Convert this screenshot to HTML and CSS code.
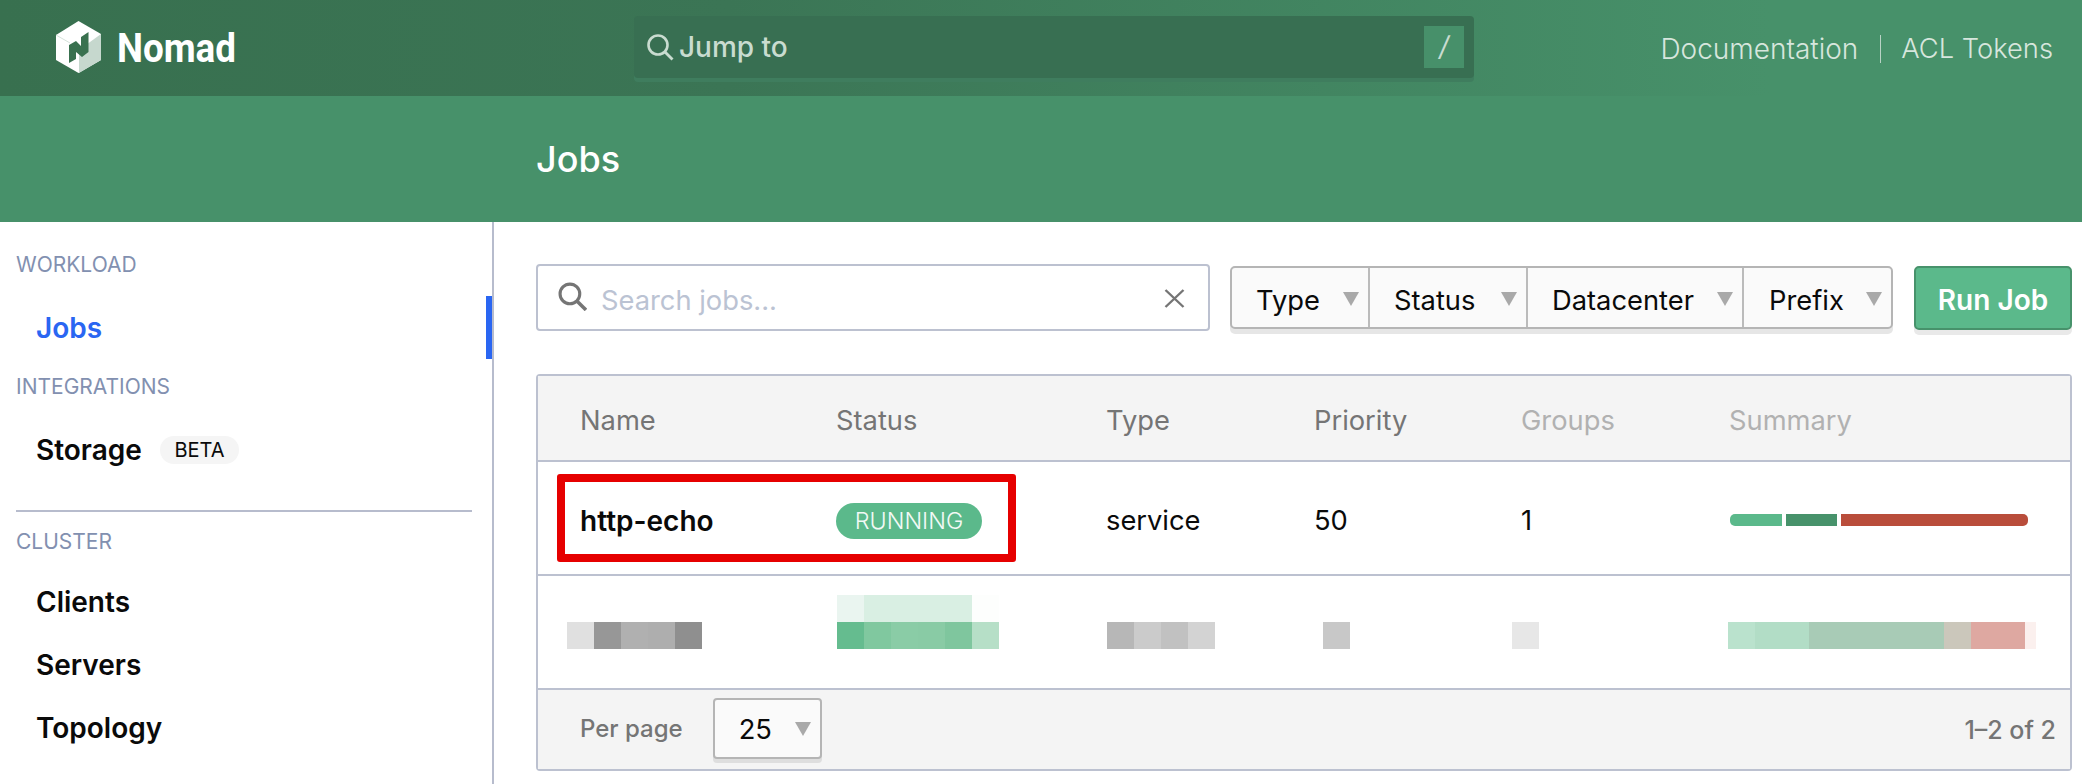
FILE: index.html
```html
<!DOCTYPE html>
<html>
<head>
<title>Jobs - Nomad</title>
<link rel="stylesheet" href="styles.css">
</head>
<body>
<header class="navbar">
  <a class="brand">
    <svg class="logo" viewBox="0 0 45 52">
      <polygon points="22.5,0 45,13 45,39 22.5,52 0,39 0,14" fill="#fff"/>
      <polygon points="23,52 23,29 45,13 45,39" fill="#c6d8ce"/>
      <line x1="0" y1="14" x2="14" y2="22" stroke="#d5e2da" stroke-width="1"/>
      <polygon points="13,24 20,20 25,25 25,16 32.5,11 32.5,31 26,36 20,31 20,38 13,42" fill="#39714f"/>
    </svg>
    <span class="brand-name">Nomad</span>
  </a>
  <div class="jump">
    <svg class="jump-icon" viewBox="0 0 28 28">
      <circle cx="12" cy="12" r="9.5" fill="none" stroke="#c9dcd0" stroke-width="2.6"/>
      <line x1="19" y1="19" x2="26.5" y2="26.5" stroke="#c9dcd0" stroke-width="2.8"/>
    </svg>
    <span class="jump-text">Jump to</span>
    <span class="jump-key">/</span>
  </div>
  <nav class="nav-links">
    <a class="nav-link">Documentation</a>
    <a class="nav-link nav-link-last">ACL Tokens</a>
  </nav>
</header>

<div class="subnav"><h1 class="page-title">Jobs</h1></div>

<div class="layout">
  <aside class="sidebar">
    <p class="menu-label label-first">WORKLOAD</p>
    <a class="menu-item active">Jobs</a>
    <p class="menu-label label-second">INTEGRATIONS</p>
    <a class="menu-item storage">Storage <span class="beta">BETA</span></a>
    <hr class="menu-rule">
    <p class="menu-label">CLUSTER</p>
    <a class="menu-item clients">Clients</a>
    <a class="menu-item">Servers</a>
    <a class="menu-item">Topology</a>
  </aside>

  <main class="content">
    <div class="toolbar">
      <div class="search">
        <svg class="search-icon" viewBox="0 0 28 28">
          <circle cx="11.5" cy="11.5" r="9.5" fill="none" stroke="#757575" stroke-width="3"/>
          <line x1="18" y1="18" x2="27" y2="27" stroke="#757575" stroke-width="3.4"/>
        </svg>
        <span class="search-text">Search jobs...</span>
        <svg class="search-clear" viewBox="0 0 21 19">
          <path d="M1.5 1 L19.5 18 M19.5 1 L1.5 18" fill="none" stroke="#757575" stroke-width="2.4"/>
        </svg>
      </div>
      <div class="filters">
        <button class="filter f-type">Type<i class="caret"></i></button>
        <button class="filter f-status">Status<i class="caret"></i></button>
        <button class="filter f-dc">Datacenter<i class="caret"></i></button>
        <button class="filter f-prefix">Prefix<i class="caret"></i></button>
      </div>
      <button class="run-job">Run Job</button>
    </div>

    <div class="table">
      <div class="row head">
        <div>Name</div>
        <div>Status</div>
        <div>Type</div>
        <div>Priority</div>
        <div class="faded">Groups</div>
        <div class="faded">Summary</div>
      </div>
      <div class="row job">
        <div class="job-name">http-echo</div>
        <div><span class="badge">RUNNING</span></div>
        <div>service</div>
        <div>50</div>
        <div>1</div>
        <div class="summary">
          <span class="seg seg-a"></span>
          <span class="seg seg-b"></span>
          <span class="seg seg-c"></span>
        </div>
      </div>
      <div class="row blurred">
        <div class="pix shift-name"><i class="g-e0"></i><i class="g-97"></i><i class="g-b0"></i><i class="g-ae"></i><i class="g-8f"></i></div>
        <div class="pix-stack">
          <div class="pix"><i class="t-1"></i><i class="t-2"></i><i class="t-2"></i><i class="t-2"></i><i class="t-2"></i><i class="t-3"></i></div>
          <div class="pix"><i class="s-1"></i><i class="s-2"></i><i class="s-3"></i><i class="s-4"></i><i class="s-5"></i><i class="s-6"></i></div>
        </div>
        <div class="pix shift-type"><i class="g-b7"></i><i class="g-cb"></i><i class="g-c1"></i><i class="g-d3"></i></div>
        <div class="pix shift-priority"><i class="g-c8"></i></div>
        <div class="pix shift-groups"><i class="g-e7"></i></div>
        <div class="pix shift-summary"><i class="b-1"></i><i class="b-2"></i><i class="b-3"></i><i class="b-4"></i><i class="b-5"></i><i class="b-6"></i></div>
      </div>
      <div class="table-foot">
        <span class="per-page">Per page</span>
        <button class="page-size">25<i class="caret"></i></button>
        <span class="page-count">1–2 of 2</span>
      </div>
      <div class="highlight"></div>
    </div>
  </main>
</div>
</body>
</html>
```

FILE: styles.css
```css
* {
  box-sizing: border-box;
}
html, body {
  margin: 0;
  height: 784px;
  overflow: hidden;
}
body {
  background: #fff;
  color: #0a0a0a;
  font-family: Inter, "Liberation Sans", sans-serif;
  font-size: 27.3px;
}

/* top bar */
.navbar {
  height: 96px;
  display: flex;
  align-items: center;
  background: linear-gradient(to right, #38704f 0%, #3b7555 35%, #47916a 85%);
}
.brand {
  display: flex;
  align-items: center;
  width: 634px;
  padding-left: 56px;
}
.logo {
  width: 45px;
  height: 52px;
  margin-top: -2px;
}
.brand-name {
  margin-left: 16px;
  font-family: Roboto, sans-serif;
  font-size: 40px;
  font-weight: 700;
  color: #fff;
  transform: scaleX(.92);
  transform-origin: left center;
}
.jump {
  width: 840px;
  height: 62px;
  margin-top: -2px;
  padding: 0 10px 0 12px;
  display: flex;
  align-items: center;
  background: #386f52;
  border-radius: 4px;
  box-shadow: 0 4px 0 #3f7d5e;
}
.jump-icon {
  width: 28px;
  height: 28px;
}
.jump-text {
  margin-left: 5px;
  flex: 1;
  font-size: 28px;
  font-weight: 500;
  color: #c9dcd0;
  margin-top: -1px;
}
.jump-key {
  width: 40px;
  height: 42px;
  background: #47906a;
  color: #c9dcd0;
  text-align: center;
  line-height: 42px;
  font-style: italic;
  font-weight: 400;
}
.nav-links {
  flex: 1;
  display: flex;
  justify-content: flex-end;
  padding-right: 29px;
  margin-top: 2px;
}
.nav-link {
  color: #d7e6dd;
  font-weight: 300;
  font-size: 28px;
  line-height: 28px;
}
.nav-link-last {
  margin-left: 22px;
  padding-left: 20px;
  border-left: 1px solid #b9d3c5;
  font-size: 27.3px;
}

.subnav {
  height: 126px;
  background: #47916a;
  padding: 41px 0 0 536px;
}
.page-title {
  margin: 0;
  color: #fff;
  font-size: 36px;
  font-weight: 500;
  line-height: 44px;
}

/* sidebar */
.layout {
  display: flex;
  height: 562px;
}
.sidebar {
  width: 494px;
  flex: none;
  padding-top: 30px;
  border-right: 2px solid #b7bccd;
}
.menu-label {
  margin: 0 0 0 16px;
  height: 24px;
  line-height: 26px;
  font-size: 21px;
  color: #8290b0;
}
.label-first {
  margin-bottom: 20px;
}
.label-second {
  margin-top: 15px;
  margin-bottom: 20px;
}
.menu-item {
  display: block;
  position: relative;
  height: 63px;
  line-height: 65px;
  padding-left: 36px;
  font-weight: 600;
  font-size: 28px;
}
.menu-item.active {
  color: #2a66f2;
}
.menu-item.active::after {
  content: "";
  position: absolute;
  top: 0;
  right: 0;
  width: 6px;
  height: 100%;
  background: #2a66f2;
}
.clients {
  margin-top: 17px;
}
.beta {
  display: inline-block;
  height: 28px;
  margin-left: 11px;
  padding: 0 14.5px;
  border-radius: 14px;
  background: #f5f5f5;
  font-size: 20px;
  font-weight: 400;
  line-height: 28px;
  vertical-align: 3px;
}
.menu-rule {
  margin: 29px 20px 17px 16px;
  height: 2px;
  border: 0;
  background: #b7bccd;
}

/* main */
.content {
  flex: 1;
  padding: 42px 10px 0 42px;
}
.toolbar {
  display: flex;
  align-items: center;
  height: 67px;
}
.search {
  width: 674px;
  height: 67px;
  display: flex;
  align-items: center;
  padding: 0 23px 0 20px;
  border: 2px solid #bcc1d0;
  border-radius: 4px;
}
.search-icon {
  width: 29px;
  height: 29px;
  margin-top: -3px;
}
.search-text {
  flex: 1;
  margin-left: 14px;
  margin-top: 5px;
  color: #bbc3d3;
}
.search-clear {
  width: 21px;
  height: 19px;
  margin-top: 1px;
}
.filters {
  display: flex;
  margin-left: 20px;
  height: 63px;
  border: 2px solid #b5b5b5;
  border-radius: 5px;
  background: #fafafa;
  box-shadow: 0 5px 0 #e6e6e6;
}
button {
  font: inherit;
  color: inherit;
  border: 0;
  background: none;
  padding: 0;
}
.filter {
  display: flex;
  align-items: center;
  padding: 5px 0 0 24px;
  border-right: 2px solid #bbb;
  position: relative;
}
.f-type { width: 138px; }
.f-status { width: 158px; }
.f-dc { width: 216px; }
.f-prefix { width: 147px; border-right: 0; padding-left: 25px; }
.caret {
  width: 0;
  height: 0;
  border-left: 8.5px solid transparent;
  border-right: 8.5px solid transparent;
  border-top: 14px solid #a9a9a9;
  position: absolute;
  right: 9px;
  top: 24px;
}
.run-job {
  margin-left: 21px;
  width: 158px;
  height: 64px;
  padding-top: 5px;
  background: #5bb98b;
  border: 2px solid #47926b;
  border-radius: 5px;
  box-shadow: 0 5px 0 #e9e9e9;
  color: #fff;
  font-size: 28px;
  font-weight: 600;
}

/* table */
.table {
  position: relative;
  margin-top: 43px;
  border: 2px solid #bcc1d0;
  border-radius: 4px;
}
.row {
  display: grid;
  grid-template-columns: 256px 270px 208px 207px 208px 1fr;
  padding-left: 42px;
  border-bottom: 2px solid #bcc1d0;
}
.head {
  height: 86px;
  padding-top: 4px;
  align-items: center;
  background: #f4f4f4;
  color: #757575;
}
.faded {
  color: #b1b1b1;
}
.job {
  height: 114px;
  padding-top: 5px;
  align-items: center;
}
.job-name {
  font-size: 28px;
  font-weight: 600;
}
.badge {
  display: block;
  width: 146px;
  height: 36px;
  margin-top: 1px;
  border-radius: 18px;
  background: #5bb98b;
  color: #f3f9f6;
  font-size: 23.3px;
  font-weight: 300;
  line-height: 36px;
  text-align: center;
}
.summary {
  display: flex;
  width: 298px;
  height: 12px;
  gap: 4px;
  margin: 0 0 2px 1px;
}
.seg {
  display: block;
}
.seg-a { width: 52px; background: #5bb98b; border-radius: 5px 0 0 5px; }
.seg-b { width: 51px; background: #47926b; }
.seg-c { flex: 1; background: #b94d3b; border-radius: 0 5px 5px 0; }

/* blurred row */
.blurred {
  height: 114px;
  align-items: end;
  padding-bottom: 39px;
}
.pix {
  display: flex;
  height: 27px;
}
.pix i {
  display: block;
  width: 27px;
}
.pix-stack { margin-left: 1px; }
.shift-name { margin-left: -13px; }
.shift-type { margin-left: 1px; }
.shift-priority { margin-left: 9px; }
.shift-groups { margin-left: -9px; }
.shift-summary { margin-left: -1px; }
.g-e0 { background: #e0e0e0; }
.g-97 { background: #979797; }
.g-b0 { background: #b0b0b0; }
.g-ae { background: #aeaeae; }
.g-8f { background: #8f8f8f; }
.g-b7 { background: #b7b7b7; }
.g-cb { background: #cbcbcb; }
.g-c1 { background: #c1c1c1; }
.g-d3 { background: #d3d3d3; }
.g-c8 { background: #c8c8c8; }
.g-e7 { background: #e7e7e7; }
.t-1 { background: #eaf5f0; }
.t-2 { background: #d9efe3; }
.t-3 { background: #fdfefd; }
.s-1 { background: #65bc8f; }
.s-2 { background: #80c89f; }
.s-3 { background: #8acca6; }
.s-4 { background: #89cba5; }
.s-5 { background: #7fc69e; }
.s-6 { background: #b6dfc7; }
.pix .b-1 { background: #bae2cd; }
.pix .b-2 { width: 54px; background: #b2ddc6; }
.pix .b-3 { width: 135px; background: #a8cbb6; }
.pix .b-4 { background: #cbc7bb; }
.pix .b-5 { width: 54px; background: #dea8a1; }
.pix .b-6 { width: 11px; background: #fbf0ee; }

/* footer */
.table-foot {
  height: 79px;
  display: flex;
  align-items: center;
  padding: 0 14px 0 42px;
  background: #f4f4f4;
  font-size: 24px;
  font-weight: 500;
  color: #757575;
}
.per-page {
  padding-bottom: 2px;
}
.page-size {
  position: relative;
  width: 109px;
  height: 61px;
  margin: 0 0 2px 30px;
  padding: 2px 0 0 24px;
  text-align: left;
  border: 2px solid #b5b5b5;
  border-radius: 4px;
  background: #fafafa;
  box-shadow: 0 4px 0 #dedede;
  color: #0a0a0a;
  font-size: 27.3px;
  font-weight: 400;
}
.page-size .caret {
  right: 9px;
  top: 22px;
}
.page-count {
  margin-left: auto;
  font-size: 25px;
}

/* the red marker drawn over the first row */
.highlight {
  position: absolute;
  left: 19px;
  top: 98px;
  width: 459px;
  height: 88px;
  border: 8px solid #e60000;
  border-radius: 3px;
}
```
